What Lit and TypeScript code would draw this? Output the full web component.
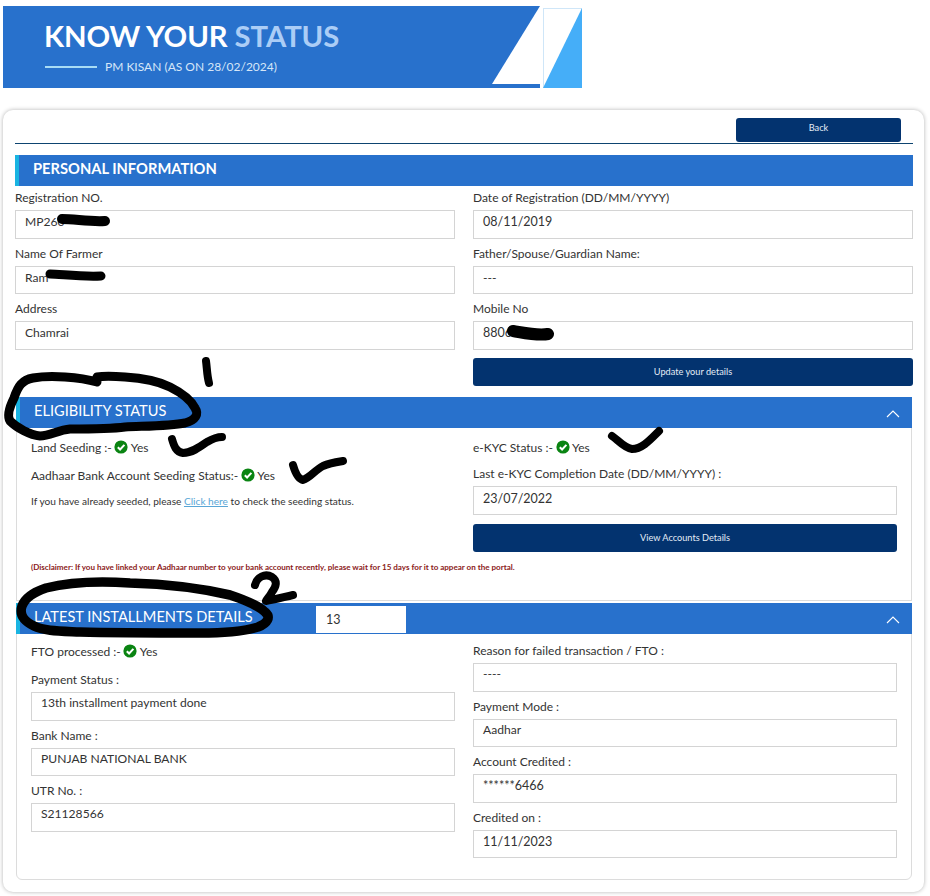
import { LitElement, html, css, svg } from "lit";
import { customElement } from "lit/decorators.js";

const check = html`<svg class="ok" viewBox="0 0 14 14" width="14" height="14"><circle cx="7" cy="7" r="6.6" fill="#0a8412"/><path d="M3.8 7.2 6.1 9.5 10.4 4.9" fill="none" stroke="#fff" stroke-width="2"/></svg>`;
const chevron = html`<svg class="chev" viewBox="0 0 14 8" width="14" height="8"><path d="M1 7 7 1 13 7" fill="none" stroke="#fff" stroke-width="1.1"/></svg>`;

const scribbles = [
  { w: 9, d: "M97 382C80 377 50 375 33 378C22 380 18 386 14 398C9 408 7 416 10 421C17 428 30 435 40 436C50 436 58 430 70 429C90 429 110 429 125 427C145 426 170 426 185 423C196 420 199 414 195 408C190 398 180 392 170 387C158 381 143 378 125 377C112 376 103 376 97 377" },
  { w: 8, d: "M206 361C207 368 207 376 209 383" },
  { w: 8, d: "M172 439C174 446 176 452 183 453C192 453 200 447 207 442C212 439 217 437 222 437" },
  { w: 8, d: "M293 465C295 472 298 479 303 480C310 478 315 470 323 466C330 463 337 462 343 461" },
  { w: 8, d: "M612 436C618 440 624 448 632 449C642 449 650 440 659 431" },
  { w: 9.5, d: "M46 588C34 592 25 598 22 606C19 615 24 621 34 626C44 631 60 631 80 632C115 633 160 633 200 633C222 633 245 631 258 627C268 623 271 617 265 612C258 605 245 600 230 595C200 588 165 584 130 583C100 581 70 582 46 588" },
  { w: 8, d: "M255 585C257 577 265 573 272 577C278 581 276 587 272 592C270 596 267 599 266 601C274 600 284 597 293 595" },
  { w: 10, d: "M62 219C75 219 90 222 105 221" },
  { w: 9, d: "M50 274C60 274 80 277 101 276" },
  { w: 12, d: "M513 331C525 333 538 336 548 334" },
];

@customElement("app-root")
export class AppRoot extends LitElement {
  static styles = css`
    :host { display: block; position: relative; width: 930px; height: 896px; overflow: hidden; background: #fff; font-family: Lato, "Open Sans", sans-serif; color: #333; font-size: 12px; }
    .hero { display: flex; align-items: stretch; height: 82px; margin: 6px 0 0 3px; width: 579px; }
    .banner { position: relative; width: 537px; background: #2871cc; padding: 0 0 0 42px; box-sizing: border-box; }
    .cut { position: absolute; right: 0; top: 0; width: 48px; height: 78px; }
    h1 { margin: 0 0 0 -1px; padding-top: 11px; font-size: 29.3px; line-height: 38px; font-weight: 700; color: #fff; letter-spacing: -0.1px; }
    h1 span { color: #abcdf6; }
    .sub { display: flex; align-items: center; gap: 8px; margin-top: 4px; color: #d6e6f8; font-size: 12px; line-height: 16px; }
    .sub i { display: block; width: 52px; height: 2px; background: #a8dcf5; }
    .tri { width: 39px; margin-left: 3px; }
    .card { box-sizing: border-box; width: 921px; height: 782px; margin: 22px 0 0 3px; padding: 8px 11px 0 12px; border-radius: 10px; background: #fff; box-shadow: 0 0 4px rgba(0,0,0,.3); }
    .top { display: flex; justify-content: flex-end; height: 25px; padding-right: 12px; border-bottom: 1px solid #0d4470; }
    .btn { display: flex; align-items: center; justify-content: center; box-sizing: border-box; background: #03336f; color: #e3ecf6; border-radius: 3px; font-size: 9.2px; padding-bottom: 1.5px; }
    .back { width: 165px; height: 24px; padding-bottom: 5px; }
    .head { display: flex; align-items: center; height: 31px; box-sizing: border-box; background: #2871cc; border-left: 4px solid #19b4e2; color: #fff; position: relative; padding-bottom: 4px; }
    .head.main { margin-top: 11px; padding-left: 14px; padding-bottom: 5px; font-size: 14.7px; font-weight: 700; }
    .head.sec { padding-left: 14px; font-size: 14.6px; margin: -1px -1px 0 -1px; }
    .chev { position: absolute; right: 12px; top: 13px; }
    .cols { display: flex; gap: 18px; }
    .cols > div { flex: 1 1 0; min-width: 0; }
    .info { padding-top: 4px; height: 211px; box-sizing: border-box; }
    .field { height: 55.6px; }
    .label { height: 16px; line-height: 16px; margin-bottom: 4px; font-size: 12px; white-space: nowrap; }
    .input { box-sizing: border-box; height: 28.5px; border: 1px solid #d4d4d4; padding: 0 9px; line-height: 20px; font-size: 12.1px; white-space: nowrap; }
    .info .input { line-height: 22px; }
    .s1 .input { line-height: 23px; }
    .num { font-size: 12.5px; line-height: 22px; }
    .wide { height: 28px; }
    .section { margin: 0 1px; border: 1px solid #dcdcdc; }
    .s1 { box-sizing: border-box; height: 204px; }
    .s1 .cols { padding: 0 14px; height: 133px; }
    .s2 { box-sizing: border-box; height: 277px; margin-top: 2px; border-radius: 0 0 6px 6px; }
    .s2 .cols { padding: 0 14px; }
    .stat { display: flex; align-items: center; gap: 2.5px; height: 16px; font-size: 12px; white-space: nowrap; }
    .ok { flex: none; }
    .seed { font-size: 10.15px; line-height: 14px; margin-top: 11px; }
    .seed a { color: #5aa6d6; text-decoration: underline; }
    .disc { margin: 0; padding: 0 0 0 14px; font-size: 8.05px; line-height: 12px; font-weight: 700; color: #8b1a1a; white-space: nowrap; }
    .sel { box-sizing: border-box; position: absolute; left: 296px; top: 3px; width: 90px; height: 27px; background: #fff; color: #333; font-size: 12.5px; line-height: 28px; padding-left: 10px; }
    .overlay { position: absolute; left: 0; top: 0; width: 930px; height: 896px; pointer-events: none; }
  `;

  field(label: string, value: string, num = false) {
    return html`<div class="field"><div class="label">${label}</div><div class="input ${num ? "num" : ""}">${value}</div></div>`;
  }

  render() {
    return html`
      <div class="hero">
        <div class="banner">
          <h1>KNOW YOUR <span>STATUS</span></h1>
          <div class="sub"><i></i>PM KISAN (AS ON 28/02/2024)</div>
          <svg class="cut" viewBox="0 0 48 78"><polygon points="0,78 48,0 48,78" fill="#fff"/></svg>
        </div>
        <svg class="tri" viewBox="0 0 39 82"><rect x=".5" y="2.5" width="38" height="79" fill="#fff" stroke="#cfe6f8"/><polygon points="0,82 39,2 39,82" fill="#45aef8"/></svg>
      </div>
      <div class="card">
        <div class="top"><div class="btn back">Back</div></div>
        <div class="head main">PERSONAL INFORMATION</div>
        <div class="cols info">
          <div>
            ${this.field("Registration NO.", "MP260")}
            ${this.field("Name Of Farmer", "Ram")}
            ${this.field("Address", "Chamrai")}
          </div>
          <div>
            ${this.field("Date of Registration (DD/MM/YYYY)", "08/11/2019", true)}
            ${this.field("Father/Spouse/Guardian Name:", "---")}
            ${this.field("Mobile No", "8806", true)}
            <div class="btn wide" style="margin-top:1.6px">Update your details</div>
          </div>
        </div>
        <div class="section s1">
          <div class="head sec">ELIGIBILITY STATUS${chevron}</div>
          <div class="cols">
            <div>
              <div class="stat" style="margin-top:11px">Land Seeding :- ${check} Yes</div>
              <div class="stat" style="margin-top:12px">Aadhaar Bank Account Seeding Status:- ${check} Yes</div>
              <div class="seed">If you have already seeded, please <a>Click here</a> to check the seeding status.</div>
            </div>
            <div>
              <div class="stat" style="margin-top:11px">e-KYC Status :- ${check} Yes</div>
              <div class="label" style="margin-top:11px">Last e-KYC Completion Date (DD/MM/YYYY) :</div>
              <div class="input num">23/07/2022</div>
              <div class="btn wide" style="margin-top:9.5px">View Accounts Details</div>
            </div>
          </div>
          <p class="disc">(Disclaimer: If you have linked your Aadhaar number to your bank account recently, please wait for 15 days for it to appear on the portal.</p>
        </div>
        <div class="section s2">
          <div class="head sec">LATEST INSTALLMENTS DETAILS<div class="sel">13</div>${chevron}</div>
          <div class="cols">
            <div>
              <div class="stat" style="margin-top:9px;margin-bottom:13px">FTO processed :- ${check} Yes</div>
              ${this.field("Payment Status :", "13th installment payment done")}
              ${this.field("Bank Name :", "PUNJAB NATIONAL BANK")}
              ${this.field("UTR No. :", "S21128566")}
            </div>
            <div style="padding-top:9px">
              ${this.field("Reason for failed transaction / FTO :", "----")}
              ${this.field("Payment Mode :", "Aadhar")}
              ${this.field("Account Credited :", "******6466", true)}
              ${this.field("Credited on :", "11/11/2023", true)}
            </div>
          </div>
        </div>
      </div>
      <svg class="overlay" viewBox="0 0 930 896">
        ${scribbles.map((s) => svg`<path d=${s.d} fill="none" stroke="#000" stroke-width=${s.w} stroke-linecap="round" stroke-linejoin="round"/>`)}
      </svg>
    `;
  }
}
